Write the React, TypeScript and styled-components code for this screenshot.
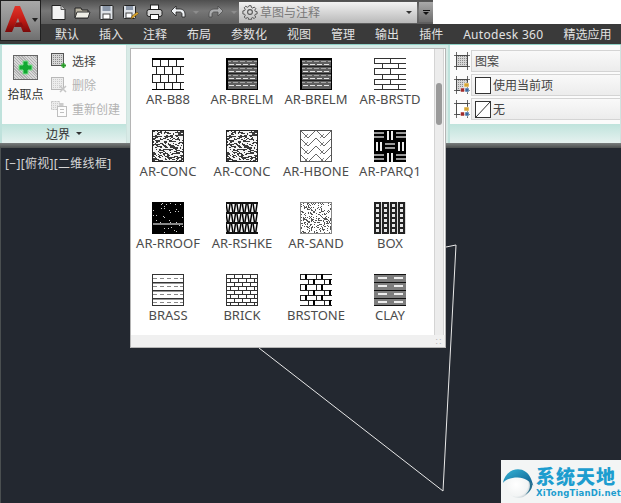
import React from "react";
import styled, { createGlobalStyle } from "styled-components";

const Global = createGlobalStyle`
  html, body { margin: 0; padding: 0; background: #fff; overflow: hidden; }
  * { box-sizing: border-box; }
  body { font-family: "Noto Sans", "Noto Sans CJK SC", sans-serif; font-size: 12px; }
`;

const Page = styled.div`
  position: relative;
  width: 621px;
  height: 503px;
  display: flex;
  flex-direction: column;
  overflow: hidden;
  background: #232830;
`;
const Header = styled.header`
  display: flex;
  height: 44px;
  background: #fff;
  flex: none;
`;
const AppCol = styled.div`
  width: 41px;
  height: 44px;
  flex: none;
  background: #3a3a3a;
`;
const AppButton = styled.div`
  width: 41px;
  height: 41px;
  display: flex;
  align-items: flex-start;
  padding: 5px 0 0 4px;
  gap: 1px;
  background: linear-gradient(#a8a8a8 0%, #8e8e8e 55%, #6f6f6f 100%);
  border: 1px solid #1f1f1f;
`;
const HeaderMain = styled.div`
  flex: 1;
  display: flex;
  flex-direction: column;
`;
const QatBar = styled.div`
  height: 24px;
  width: 392px;
  display: flex;
  align-items: center;
  padding-left: 9px;
  background: linear-gradient(#4f4f4f, #777 45%, #5d5d5d);
`;
const QatIcon = styled.span<{ $gap?: number }>`
  display: flex;
  width: 17px;
  height: 17px;
  margin-right: ${(p) => p.$gap ?? 7}px;
`;
const Chevron = styled.span<{ $m?: number; $c?: string }>`
  width: 0;
  height: 0;
  border-left: 3px solid transparent;
  border-right: 3px solid transparent;
  border-top: 3px solid ${(p) => p.$c ?? "#8d8d8d"};
  margin-right: ${(p) => p.$m ?? 8}px;
  flex: none;
`;
const AppChevron = styled(Chevron)`
  margin-top: 12px;
  border-left-width: 3px;
  border-right-width: 3px;
  border-top-width: 4px;
`;
const Combo = styled.div`
  width: 178px;
  height: 21px;
  display: flex;
  align-items: center;
  padding: 0 3px;
  color: #7a7a7a;
  font-size: 12px;
  background: linear-gradient(#f2f2f2, #b9b9b9);
`;
const ComboText = styled.span`
  flex: 1;
  margin-left: 2px;
`;
const QatEnd = styled.div`
  width: 14px;
  height: 20px;
  margin-left: 2px;
  display: flex;
  flex-direction: column;
  align-items: center;
  justify-content: center;
  gap: 1px;
  background: linear-gradient(#a9a9a9, #6d6d6d);
`;
const EndBar = styled.i`
  width: 7px;
  height: 1px;
  background: #111;
`;
const Menu = styled.nav`
  height: 20px;
  display: flex;
  align-items: center;
  gap: 20px;
  padding-left: 14px;
  background: #3a3a3a;
  color: #e2e2e2;
  font-size: 12px;
  white-space: nowrap;
`;
const MenuItem = styled.span<{ $latin?: boolean }>`
  letter-spacing: ${(p) => (p.$latin ? "0.3px" : "0")};
`;
const Ribbon = styled.div`
  height: 99px;
  flex: none;
  display: flex;
  justify-content: space-between;
  background: #d8ebe7;
  border-top: 1px solid #8fd0c5;
`;
const Panel = styled.section<{ $w: number }>`
  width: ${(p) => p.$w}px;
  display: flex;
  flex-direction: column;
  background: #fbfbfb;
  border-left: 2px solid #bfe2dc;
  border-right: 1px solid #cfe3df;
`;
const PanelBody = styled.div`
  flex: 1;
  display: flex;
`;
const PanelTitle = styled.div`
  height: 19px;
  display: flex;
  align-items: center;
  justify-content: center;
  gap: 6px;
  color: #333;
  background: linear-gradient(#bfe3dc, #e6f2f0);
`;
const BigCol = styled.div`
  width: 47px;
  display: flex;
  flex-direction: column;
  align-items: center;
  padding-top: 10px;
  gap: 5px;
  color: #333;
`;
const BigBtn = styled.div`
  width: 25px;
  height: 25px;
  border: 1px solid #666;
  display: flex;
  align-items: center;
  justify-content: center;
  background: repeating-linear-gradient(45deg, #d8d8d8 0 1px, #b0b0b0 1px 2px);
`;
const SmallCol = styled.div`
  display: flex;
  flex-direction: column;
  gap: 6px;
  padding: 7px 0 0 2px;
`;
const SmallRow = styled.div<{ $off?: boolean }>`
  display: flex;
  align-items: center;
  gap: 5px;
  height: 18px;
  color: ${(p) => (p.$off ? "#b3b3b3" : "#444")};
`;
const RightBody = styled.div`
  flex: 1;
  display: flex;
  flex-direction: column;
  gap: 2px;
  padding: 5px 0 0 4px;
`;
const PropRow = styled.div`
  display: flex;
  align-items: center;
  gap: 1px;
  height: 22px;
`;
const PropField = styled.div`
  flex: 1;
  height: 22px;
  display: flex;
  align-items: center;
  gap: 2px;
  padding-left: 3px;
  color: #444;
  background: linear-gradient(#f9f9f9, #ececec);
  border: 1px solid #d4d4d4;
  border-right: 0;
`;
const ColorBox = styled.span`
  width: 16px;
  height: 17px;
  flex: none;
  display: flex;
  background: #fff;
  border: 1px solid #333;
`;
const Divider = styled.div`
  height: 5px;
  flex: none;
  background: linear-gradient(#7a7e7e, #4b4e4e);
`;
const Canvas = styled.main`
  position: relative;
  flex: 1;
  background: #232830;
  color: #d6d6d6;
  padding: 8px 4px;
  line-height: 16px;
  letter-spacing: 0.3px;
  border-left: 1px solid #4a4f50;
`;
const CanvasLines = styled.svg`
  position: absolute;
  left: -1px;
  top: 0;
`;
const Popup = styled.div`
  position: absolute;
  left: 130px;
  top: 48px;
  width: 316px;
  height: 300px;
  background: #fff;
  border: 1px solid #b5b5b5;
  display: flex;
  flex-direction: column;
`;
const PopupMain = styled.div`
  flex: 1;
  display: flex;
  min-height: 0;
`;
const Grid = styled.div`
  flex: 1;
  display: grid;
  grid-template-columns: repeat(4, 74px);
  grid-auto-rows: 72px;
  padding: 9px 0 0 0;
`;
const Cell = styled.div`
  display: flex;
  flex-direction: column;
  align-items: center;
  gap: 1px;
  color: #4c4c4c;
  font-size: 13px;
  line-height: 17px;
  white-space: nowrap;
`;
const Track = styled.div`
  width: 10px;
  margin-right: 1px;
  background: #ececec;
  border-left: 1px solid #d4d4d4;
  border-right: 1px solid #d4d4d4;
  padding: 34px 1px 0;
`;
const Thumb = styled.div`
  height: 42px;
  background: #9a9a9a;
  border-radius: 3px;
`;
const Grip = styled.div`
  height: 12px;
  flex: none;
  background: #f0f0f0;
  display: flex;
  justify-content: flex-end;
  align-items: flex-end;
  padding: 0 3px 2px 0;
  color: #aaa;
  font-size: 7px;
  line-height: 7px;
`;
const Badge = styled.div`
  position: absolute;
  right: 0;
  bottom: 0;
  width: 120px;
  height: 43px;
  display: flex;
  align-items: center;
  gap: 1px;
  padding-left: 1px;
  background: #f3f5f5;
`;
const BadgeText = styled.div`
  display: flex;
  flex-direction: column;
  gap: 1px;
  color: #1d9dcf;
  font-weight: 700;
`;
const BadgeTitle = styled.div`
  font-size: 19px;
  line-height: 23px;
  letter-spacing: 1px;
  font-family: "Noto Sans CJK SC", sans-serif;
  font-weight: 900;
`;
const BadgeSub = styled.div`
  font-size: 8.5px;
  line-height: 11px;
  letter-spacing: 0.2px;
  font-family: "DejaVu Sans", sans-serif;
`;

/* ---------- hatch swatches ---------- */
const rng = (seed: number) => () => {
  seed = (seed * 9301 + 49297) % 233280;
  return seed / 233280;
};
const Px = ({ x, y, w = 1, h = 1, c = "#000" }: { x: number; y: number; w?: number; h?: number; c?: string }) => (
  <rect x={x} y={y} width={w} height={h} fill={c} />
);
const noise = (seed: number, density: number, color: string, w = 1) => {
  const r = rng(seed);
  const out: React.ReactNode[] = [];
  for (let y = 1; y < 31; y++)
    for (let x = 1; x < 31; x++)
      if (r() < density) out.push(<Px key={`${x}-${y}`} x={x} y={y} w={Math.min(w, 31 - x)} c={color} />);
  return out;
};
const bricks = (step: number, brick: number, line: string, thick = 1) => {
  const out: React.ReactNode[] = [];
  let row = 0;
  for (let y = 0; y < 32; y += step, row++) {
    out.push(<Px key={`h${y}`} x={0} y={y} w={32} h={thick} c={line} />);
    for (let x = row % 2 ? brick / 2 : 0; x < 32; x += brick)
      out.push(<Px key={`v${y}-${x}`} x={x} y={y} w={1} h={step} c={line} />);
  }
  out.push(<Px key="b" x={0} y={31} w={32} h={1} c={line} />);
  return out;
};

const renderHatch = (kind: string): React.ReactNode => {
  switch (kind) {
    case "AR-B88":
      return (
        <>
          {bricks(8, 8, "#222", 1)}
          <Px x={0} y={0} w={32} h={1.5} c="#000" />
          <Px x={0} y={30.5} w={32} h={1.5} c="#000" />
        </>
      );
    case "AR-BRELM":
      return (
        <>
          <Px x={0} y={0} w={32} h={32} c="#5e5e5e" />
          {[3, 6, 10, 13, 17, 20, 24, 27].map((y, i) =>
            Array.from({ length: 5 }).map((_, k) => (
              <Px key={`${y}-${k}`} x={(i % 2 ? 3 : 0) + k * 7} y={y} w={5} h={1} c={i % 2 ? "#e4e4e4" : "#a6a6a6"} />
            ))
          )}
          {[8, 15, 22].map((y) => (
            <Px key={y} x={1} y={y} w={30} h={1} c="#222" />
          ))}
          <rect x=".75" y=".75" width="30.5" height="30.5" fill="none" stroke="#000" strokeWidth="1.5" />
        </>
      );
    case "AR-BRSTD":
      return bricks(5.2, 16, "#333", 1);
    case "AR-CONC":
      return (
        <>
          <Px x={0} y={0} w={32} h={32} c="#3a3a3a" />
          {noise(17, 0.34, "#f4f4f4", 2)}
          <rect x=".5" y=".5" width="31" height="31" fill="none" stroke="#222" />
        </>
      );
    case "AR-HBONE":
      return (
        <>
          {[-8, 0, 8, 16, 24, 32].map((y) => (
            <polyline
              key={y}
              points={`0,${y} 8,${y + 8} 16,${y} 24,${y + 8} 32,${y}`}
              fill="none"
              stroke="#666"
              strokeWidth="1"
              shapeRendering="auto"
            />
          ))}
          {[0, 16].map((x) =>
            [-4, 4, 12, 20, 28].map((y) => (
              <line key={`${x}-${y}`} x1={x + 4} y1={y + 4} x2={x + 8} y2={y} stroke="#777" strokeWidth=".9" shapeRendering="auto" />
            ))
          )}
          <rect x=".5" y=".5" width="31" height="31" fill="none" stroke="#555" />
        </>
      );
    case "AR-PARQ1":
      return (
        <>
          <Px x={0} y={0} w={32} h={32} />
          {[0, 1, 2].map((r) =>
            [0, 1, 2].map((c) =>
              (r + c) % 2 ? (
                <g key={`${r}${c}`}>
                  <Px x={c * 11 + 2} y={r * 11 + 1} w={1.5} h={9} c="#eee" />
                  <Px x={c * 11 + 6} y={r * 11 + 1} w={1.5} h={9} c="#eee" />
                </g>
              ) : (
                <g key={`${r}${c}`}>
                  <Px x={c * 11} y={r * 11 + 2} w={10} h={2} c="#999" />
                  <Px x={c * 11} y={r * 11 + 6} w={10} h={2} c="#999" />
                </g>
              )
            )
          )}
        </>
      );
    case "AR-RROOF":
      return (
        <>
          <Px x={0} y={0} w={32} h={32} />
          {noise(29, 0.03, "#ccc")}
          <Px x={1} y={21} w={30} h={2} c="#888" />
        </>
      );
    case "AR-RSHKE":
      return (
        <>
          <Px x={0} y={0} w={32} h={32} c="#f4f4f4" />
          {[1, 11, 21].map((y, r) =>
            Array.from({ length: 12 }).map((_, i) => (
              <line
                key={`${r}-${i}`}
                x1={i * 2.7 + (i % 2 ? 1.5 : 0)}
                y1={y}
                x2={i * 2.7 + (i % 2 ? 0 : 1.5)}
                y2={y + 9.5}
                stroke="#000"
                strokeWidth="1.5"
                shapeRendering="auto"
              />
            ))
          )}
          {[0, 10, 20, 30].map((y) => (
            <Px key={y} x={0} y={y} w={32} h={1.5} c="#111" />
          ))}
        </>
      );
    case "AR-SAND":
      return (
        <>
          {noise(41, 0.3, "#555")}
          <rect x=".5" y=".5" width="31" height="31" fill="none" stroke="#888" />
        </>
      );
    case "BOX":
      return (
        <>
          <Px x={0} y={0} w={32} h={32} c="#222" />
          {[0, 8, 16, 24].map((x) => (
            <g key={x}>
              <Px x={x + 6.5} y={0} w={1} h={32} c="#ddd" />
              {[1.5, 6.5, 11.5, 16.5, 21.5, 26.5].map((y) => (
                <rect key={y} x={x + 1.5} y={y} width="3.5" height="3.2" fill="#e6e6e6" />
              ))}
            </g>
          ))}
        </>
      );
    case "BRASS":
      return (
        <>
          {[0, 8, 16, 24, 31].map((y) => (
            <Px key={y} x={0} y={y} w={32} h={1} c="#333" />
          ))}
          {[4, 12, 20, 28].map((y) =>
            [1, 8, 15, 22, 28].map((x) => <Px key={`${x}-${y}`} x={x} y={y} w={4} h={1} c="#888" />)
          )}
          {[8, 16, 24].map((y) => (
            <Px key={`g${y}`} x={0} y={y + 1} w={32} h={1} c="#999" />
          ))}
          <Px x={0} y={0} w={1} h={32} c="#333" />
          <Px x={31} y={0} w={1} h={32} c="#333" />
        </>
      );
    case "BRICK":
      return (
        <>
          {bricks(4, 8, "#333", 1)}
          <Px x={0} y={0} w={1} h={32} c="#333" />
          <Px x={31} y={0} w={1} h={32} c="#333" />
        </>
      );
    case "BRSTONE":
      return (
        <>
          {bricks(5.2, 16, "#222", 1)}
          {[[5, 0], [21, 0], [13, 5], [29, 5], [5, 11], [21, 11], [13, 16], [29, 16], [5, 21], [21, 21], [13, 26], [29, 26]].map(([x, y]) => (
            <Px key={`${x}-${y}`} x={x} y={y} w={2} h={5} c="#000" />
          ))}
        </>
      );
    case "CLAY":
      return (
        <>
          <Px x={0} y={0} w={32} h={32} c="#7d7d7d" />
          {[0, 8, 16, 24].map((y) => (
            <g key={y}>
              <Px x={0} y={y} w={32} h={1} c="#111" />
              <Px x={4} y={y + 3} w={9} h={2} c="#eee" />
              <Px x={20} y={y + 3} w={9} h={2} c="#eee" />
            </g>
          ))}
          <Px x={0} y={31} w={32} h={1} c="#111" />
        </>
      );
    default:
      return null;
  }
};

const Hatch = ({ kind }: { kind: string }) => (
  <svg width="32" height="32" viewBox="0 0 32 32" shapeRendering="crispEdges">
    <rect width="32" height="32" fill="#fff" />
    {renderHatch(kind)}
  </svg>
);

/* ---------- icons ---------- */
const NewIcon = () => (
  <svg width="17" height="17" viewBox="0 0 17 17">
    <path d="M2 1.500h9l4 4v10H2z" fill="#f3f3f3" stroke="#222" />
    <path d="M11 1.500v4h4" fill="#ccc" stroke="#555" />
  </svg>
);
const OpenIcon = () => (
  <svg width="17" height="17" viewBox="0 0 17 17">
    <path d="M1 4h6l1 2h6v8H1z" fill="#b8b3a2" stroke="#222" />
    <path d="M3 8h13l-2 6H1z" fill="#efeee6" stroke="#333" />
  </svg>
);
const SaveIcon = () => (
  <svg width="17" height="17" viewBox="0 0 17 17">
    <rect x="2" y="1.500" width="13" height="14" rx="1" fill="#dfe3e8" stroke="#222" />
    <rect x="4.500" y="2" width="8" height="5" fill="#8a96a8" />
    <rect x="5" y="10" width="7" height="5" fill="#fff" stroke="#444" />
  </svg>
);
const SaveAsIcon = () => (
  <svg width="17" height="17" viewBox="0 0 17 17">
    <rect x="1.500" y="1.500" width="12" height="13" rx="1" fill="#dfe3e8" stroke="#222" />
    <rect x="4" y="2" width="7" height="4" fill="#8a96a8" />
    <rect x="4" y="9" width="6" height="5" fill="#fff" stroke="#444" />
    <path d="M9 15l1-3 5-4 1.500 1.500-5 4z" fill="#e0a92c" stroke="#6a4a10" strokeWidth=".6" />
  </svg>
);
const PrintIcon = () => (
  <svg width="17" height="17" viewBox="0 0 17 17">
    <rect x="4.500" y="1" width="8" height="5" fill="#fff" stroke="#222" />
    <rect x="1" y="5.500" width="15" height="7" rx="2" fill="#d4d4d4" stroke="#222" />
    <rect x="4.500" y="10.500" width="8" height="5" fill="#fff" stroke="#222" />
  </svg>
);
const UndoIcon = ({ faded }: { faded?: boolean }) => (
  <svg width="17" height="17" viewBox="0 0 17 17" style={faded ? { transform: "scaleX(-1)", opacity: 0.45 } : undefined}>
    <path d="M1 7l5-5v3h4c3 0 5 2 5 5v3h-3v-3c0-1-1-2-2-2H6v4z" fill="#eef1f4" stroke="#222" strokeWidth=".8" />
  </svg>
);
const GearIcon = () => (
  <svg width="16" height="16" viewBox="0 0 16 16" fill="none" stroke="#555" strokeWidth="1.100">
    <circle cx="8" cy="8" r="2.400" />
    <path d="M6.800 1h2.400l.4 2 1.400.6 1.700-1.100 1.700 1.700-1.100 1.700.6 1.400 2 .4v2.400l-2 .4-.6 1.400 1.100 1.700-1.700 1.700-1.700-1.100-1.400.6-.4 2H6.800l-.4-2-1.400-.6-1.700 1.100-1.700-1.700 1.100-1.700-.6-1.400-2-.4V6.800l2-.4.6-1.400-1.100-1.700 1.700-1.700 1.700 1.100 1.400-.6z" transform="translate(.8 .8) scale(.9)" />
  </svg>
);
const AcadLogo = () => (
  <svg width="26" height="26" viewBox="0 0 26 26">
    <defs>
      <linearGradient id="acad" x1="0" y1="0" x2="0" y2="1">
        <stop offset="0" stopColor="#e0352a" />
        <stop offset=".55" stopColor="#c01a14" />
        <stop offset="1" stopColor="#7a0a0a" />
      </linearGradient>
    </defs>
    <path d="M10 0h5l11 26h-8l-2-5h-5l2.500-4.500h1L13 12 7 26H0z" fill="url(#acad)" />
    <path d="M9 21l2-4.500h5.500L18.500 21z" fill="#8c1010" />
  </svg>
);
const SelectIcon = ({ off }: { off?: boolean }) => (
  <svg width="16" height="16" viewBox="0 0 16 16" style={off ? { opacity: 0.4 } : undefined}>
    <defs>
      <pattern id="dg" width="2" height="2" patternUnits="userSpaceOnUse">
        <rect width="2" height="2" fill="#d6d6d6" />
        <rect width="1" height="1" fill="#8b8b8b" />
      </pattern>
    </defs>
    <rect x=".5" y=".5" width="12" height="12" fill="url(#dg)" stroke="#555" />
    {off ? (
      <path d="M9 9l6 6M15 9l-6 6" stroke="#777" strokeWidth="1.500" />
    ) : (
      <path d="M10 12.500h5M12.500 10v5" stroke="#2a9c2a" strokeWidth="2" />
    )}
  </svg>
);
const RecreateIcon = () => (
  <svg width="16" height="16" viewBox="0 0 16 16" style={{ opacity: 0.4 }}>
    <rect x=".5" y=".5" width="8" height="8" fill="url(#dg)" stroke="#777" strokeDasharray="2 1" />
    <rect x="6.500" y="5.500" width="9" height="10" fill="#fff" stroke="#666" />
    <path d="M9 8.500h4M9 11.500h4" stroke="#666" />
    <rect x="8.500" y="2" width="4" height="3" fill="#888" />
  </svg>
);
const HatchPropIcon = ({ dots, fill }: { dots?: boolean; fill?: boolean }) => (
  <svg width="16" height="18" viewBox="0 0 16 18">
    <rect x="2.500" y="3.500" width="11" height="11" fill={fill ? "url(#dg)" : "#fff"} stroke="#444" strokeWidth=".8" />
    <path d="M0 3.500h16M0 14.500h16M2.500 0v18M13.500 0v18" stroke="#444" strokeWidth=".8" />
    {dots && (
      <g>
        <rect x="10" y="7" width="5" height="4" fill="#d7a634" stroke="#fff" strokeWidth=".5" />
        <rect x="6.500" y="12" width="4" height="4" fill="#a12a2a" stroke="#fff" strokeWidth=".5" />
        <rect x="11" y="12" width="4" height="4" fill="#3b6aa0" stroke="#fff" strokeWidth=".5" />
      </g>
    )}
  </svg>
);
const SwirlLogo = () => (
  <svg width="36" height="38" viewBox="0 0 36 38">
    <defs>
      <linearGradient id="sw" x1="0" y1="0" x2="1" y2="1">
        <stop offset="0" stopColor="#35b6d8" />
        <stop offset="1" stopColor="#0d5a8c" />
      </linearGradient>
      <radialGradient id="ball" cx=".4" cy=".45" r=".7">
        <stop offset="0" stopColor="#ffffff" />
        <stop offset=".7" stopColor="#f2f4f4" />
        <stop offset="1" stopColor="#9fb2bb" />
      </radialGradient>
    </defs>
    <circle cx="18" cy="23" r="13" fill="url(#ball)" />
    <path d="M1 20C3 8 16 1 26 8C30 11 32 15 34 23C30 18 25 14 17 14C10 14 4 16 1 20z" fill="url(#sw)" />
    <path d="M28 16c4 5 3 13-3 17 3-1 8-6 8-11-1-3-3-5-5-6z" fill="#27708f" />
  </svg>
);

const HATCHES = [
  "AR-B88", "AR-BRELM", "AR-BRELM", "AR-BRSTD",
  "AR-CONC", "AR-CONC", "AR-HBONE", "AR-PARQ1",
  "AR-RROOF", "AR-RSHKE", "AR-SAND", "BOX",
  "BRASS", "BRICK", "BRSTONE", "CLAY",
];
const MENU = ["默认", "插入", "注释", "布局", "参数化", "视图", "管理", "输出", "插件", "Autodesk 360", "精选应用"];

export default function App() {
  return (
    <Page>
      <Global />
      <Header>
        <AppCol>
          <AppButton>
            <AcadLogo />
            <AppChevron $m={0} $c="#222" />
          </AppButton>
        </AppCol>
        <HeaderMain>
          <QatBar>
            <QatIcon><NewIcon /></QatIcon>
            <QatIcon><OpenIcon /></QatIcon>
            <QatIcon><SaveIcon /></QatIcon>
            <QatIcon><SaveAsIcon /></QatIcon>
            <QatIcon><PrintIcon /></QatIcon>
            <QatIcon $gap={6}><UndoIcon /></QatIcon>
            <Chevron />
            <QatIcon $gap={7}><UndoIcon faded /></QatIcon>
            <Chevron $m={2} />
            <Combo>
              <GearIcon />
              <ComboText>草图与注释</ComboText>
              <Chevron $m={2} $c="#333" />
            </Combo>
            <QatEnd>
              <EndBar />
              <Chevron $m={0} $c="#111" />
            </QatEnd>
          </QatBar>
          <Menu>
            {MENU.map((m) => (
              <MenuItem key={m} $latin={m.startsWith("Auto")}>{m}</MenuItem>
            ))}
          </Menu>
        </HeaderMain>
      </Header>
      <Ribbon>
        <Panel $w={127}>
          <PanelBody>
            <BigCol>
              <BigBtn>
                <svg width="15" height="15" viewBox="0 0 15 15">
                  <path d="M5 1h5v4h4v5h-4v4H5v-4H1V5h4z" fill="#12a832" stroke="#7fe08f" strokeWidth="1" />
                </svg>
              </BigBtn>
              <span>拾取点</span>
            </BigCol>
            <SmallCol>
              <SmallRow><SelectIcon /><span>选择</span></SmallRow>
              <SmallRow $off><SelectIcon off /><span>删除</span></SmallRow>
              <SmallRow $off><RecreateIcon /><span>重新创建</span></SmallRow>
            </SmallCol>
          </PanelBody>
          <PanelTitle>
            <span>边界</span>
            <Chevron $m={0} $c="#333" />
          </PanelTitle>
        </Panel>
        <Panel $w={173}>
          <RightBody>
            <PropRow>
              <HatchPropIcon fill />
              <PropField>图案</PropField>
            </PropRow>
            <PropRow>
              <HatchPropIcon fill dots />
              <PropField>
                <ColorBox />
                <span>使用当前项</span>
              </PropField>
            </PropRow>
            <PropRow>
              <HatchPropIcon dots />
              <PropField>
                <ColorBox>
                  <svg width="14" height="15" viewBox="0 0 14 15">
                    <path d="M0 15L14 0" stroke="#333" />
                  </svg>
                </ColorBox>
                <span>无</span>
              </PropField>
            </PropRow>
          </RightBody>
          <PanelTitle />
        </Panel>
      </Ribbon>
      <Divider />
      <Canvas>
        [−][俯视][二维线框]
        <CanvasLines width="621" height="355" viewBox="0 148 621 355" fill="none">
          <path d="M259 348L443 491L456 245L446 247" stroke="#e8e8e8" strokeWidth="1" />
        </CanvasLines>
      </Canvas>
      <Popup>
        <PopupMain>
          <Grid>
            {HATCHES.map((h, i) => (
              <Cell key={i}>
                <Hatch kind={h} />
                <span>{h}</span>
              </Cell>
            ))}
          </Grid>
          <Track>
            <Thumb />
          </Track>
        </PopupMain>
        <Grip>∷</Grip>
      </Popup>
      <Badge>
        <SwirlLogo />
        <BadgeText>
          <BadgeTitle>系统天地</BadgeTitle>
          <BadgeSub>XiTongTianDi.net</BadgeSub>
        </BadgeText>
      </Badge>
    </Page>
  );
}
